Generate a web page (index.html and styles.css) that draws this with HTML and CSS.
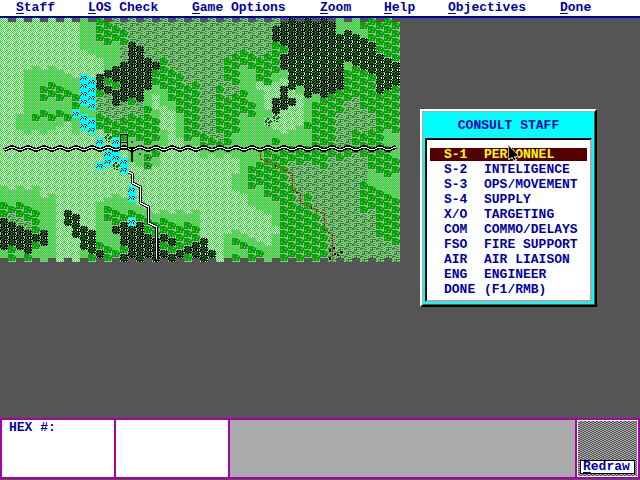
FILE: index.html
```html
<!DOCTYPE html>
<html lang="en">
<head>
<meta charset="utf-8">
<title>Consult Staff</title>
<link rel="stylesheet" href="styles.css">
</head>
<body>
<nav class="menubar" aria-label="Main menu">
  <button type="button"><u>S</u>taff</button>
  <button type="button"><u>L</u>OS Check</button>
  <button type="button"><u>G</u>ame Options</button>
  <button type="button"><u>Z</u>oom</button>
  <button type="button"><u>H</u>elp</button>
  <button type="button"><u>O</u>bjectives</button>
  <button type="button"><u>D</u>one</button>
</nav>
<main class="desktop">
  <div class="map">
  <canvas id="terrain" width="400" height="244"></canvas>
  <svg width="400" height="244" viewBox="0 0 400 244" shape-rendering="crispEdges" role="img" aria-label="Hex map">
    <g fill="none" stroke-linejoin="miter">
      <path id="river-bank" stroke="#000" stroke-width="4"/>
      <path id="river" stroke="#fff" stroke-width="1"/>
      <path stroke="#000" stroke-width="3" d="M128.500 154L132.500 156V165L140.500 169V185L148.500 189V205L156.500 209V241"/>
      <path stroke="#fff" stroke-width="1" d="M128.500 154L132.500 156V165L140.500 169V185L148.500 189V205L156.500 209V241"/>
      <path stroke="#aa5500" stroke-width="1" d="M260.500 132V141L292.500 156V172L300.500 176V185L324.500 196V212L332.500 217V241"/>
      <path stroke="#000" stroke-width="1" stroke-dasharray="1 4" d="M260.500 132V141L292.500 156V172L300.500 176V185L324.500 196V212L332.500 217V241"/>
      <path stroke="#000" d="M120.500 116.500H127.500V131.500H120.500ZM120 124H128"/>
      <path stroke="#000" stroke-width="2" d="M132 129V144"/>
    </g>
    <path fill="#000" d="M329 231h2v3h-2zM333 229h2v2h-2zM329 239h2v3h-2zM337 236h2v2h-2zM340 233h3v2h-3zM334 235h2v2h-2z"/>
    <path fill="#aa00aa" d="M131 123h2v2h-2zM139 127h2v2h-2zM139 135h2v2h-2zM147 139h2v2h-2zM147 147h2v2h-2z"/>
  </svg>
  </div>
  <section class="dialog" aria-labelledby="dialog-title">
    <h1 id="dialog-title">CONSULT STAFF</h1>
    <div class="list">
      <button type="button" class="selected"><span>S-1</span><span>PERSONNEL</span></button>
      <button type="button"><span>S-2</span><span>INTELIGENCE</span></button>
      <button type="button"><span>S-3</span><span>OPS/MOVEMENT</span></button>
      <button type="button"><span>S-4</span><span>SUPPLY</span></button>
      <button type="button"><span>X/O</span><span>TARGETING</span></button>
      <button type="button"><span>COM</span><span>COMMO/DELAYS</span></button>
      <button type="button"><span>FSO</span><span>FIRE SUPPORT</span></button>
      <button type="button"><span>AIR</span><span>AIR LIAISON</span></button>
      <button type="button"><span>ENG</span><span>ENGINEER</span></button>
      <button type="button"><span>DONE</span><span>(F1/RMB)</span></button>
    </div>
    <svg class="pointer" width="11" height="17" viewBox="0 0 11 17" aria-hidden="true" shape-rendering="crispEdges">
      <path fill="#000" stroke="#aaa" d="M.5 .5L9.500 9.500V11.500H6.500L8.500 15.500H5.500L4.500 12.500L2.500 13.500L.5 14.500Z"/>
    </svg>
  </section>
</main>
<footer class="status">
  <div class="cell">HEX #:</div>
  <div class="cell"></div>
  <div class="cell message"></div>
  <div class="cell tools"><button type="button"><u>R</u>edraw</button></div>
</footer>
<script>
const COLORS = {
  l: "#00ff00", w: "#ffffff", a: "#aaaaaa", d: "#00aa00",
  f: "#005500", k: "#000000", c: "#00ffff"
};

// One 8x8 bitmap per terrain: c clear, m meadow, w woods, r brush,
// F forest, D forest in clear ground, b water, t rubble.
const TILES = {
  c: ["lwlwlwaa", "wlwlwlwl", "lwlwlwlw", "wlwlwlwl", "lwlwawaa", "wlwlwlwl", "lwlwlwlw", "aaawaaaa"],
  m: ["alalalaa", "lalalala", "alalalal", "lalalala", "alalalaa", "lalalala", "llalalal", "aalaalaa"],
  w: ["dddddlaa", "ddddddda", "dddddadd", "dddddddd", "dadddddd", "ddddadda", "ddddddda", "aaaaaaaa"],
  r: ["aadddaaa", "adaaadda", "ddddaaaa", "ddaaddda", "aaaaaaaa", "aadddddd", "daaadaaa", "aadddada"],
  F: ["akfkkaka", "kkfdfkkk", "akdkfdka", "kfkffkfk", "kkfdkfkk", "kdfkfdfa", "akkfkkkk", "akakkaka"],
  D: ["wkfkkwkw", "kkfdfkkk", "lkdkfdkl", "kfkffkfk", "kkfdkfkk", "kdfkfdfw", "lkkfkkkk", "wklkkwkl"],
  b: ["cccccccc", "cccccccc", "ckcckkcc", "cckcccka", "ckckckcc", "kcccckcc", "cccccccc", "cccccccc"],
  t: ["wlwkklwa", "lwddkwlw", "wkdlwlkl", "ddkwlddk", "wkdlkkda", "lwlwddlw", "wlklwlwl", "aaawkkaa"]
};

// Run lengths of terrain from top to bottom, one string per column.
const COLUMNS = [
  "c21 m2 w2 F4 m1", "c21 m2 w1 r1 F3 w2", "c12 m2 c7 m2 w2 r1 F3 m1", "c6 m8 c7 m2 w2 r1 F3 w1",
  "c6 m6 w1 m1 c7 m3 w3 F1 w1 m1", "c6 m2 w2 m1 w1 m2 c8 m4 F2 m2", "c6 m2 w2 m2 w1 m1 c8 m8",
  "c6 m2 w2 m1 w1 m1 c17", "c7 m2 w1 m2 w1 c11 D2 c4", "c7 m2 w2 b1 m2 c10 D3 c3",
  "m4 c3 b4 m1 b2 c12 D3 m1", "m4 c3 b4 m1 b2 c12 D3 w1",
  "w3 m2 c2 F2 w1 r2 w2 c1 b1 c2 b1 c4 m5 w1 F1", "w3 m3 F1 w1 F1 r3 w2 t1 c1 b2 c4 m1 w2 m3 w2",
  "r1 w2 m3 F2 w1 F2 r2 w2 b3 t1 c3 m2 w2 F1 m2 w1", "r1 w2 r2 F5 r2 w3 m1 c1 b2 c3 m2 w1 F3 w1 F1",
  "r3 F7 w1 r1 w3 m3 c3 b2 m1 w1 b1 F4", "r3 F7 r2 w3 m3 c5 m1 w1 F5",
  "r5 F4 m2 w5 m1 w2 c5 m1 w2 F3", "r5 F1 w2 m1 c2 m1 w3 m1 w1 m1 c6 m1 w2 F3",
  "r5 w4 m2 c3 m2 c8 m1 w2 F1 w1 F1", "r6 w4 m1 c13 m1 w2 F1 w1 F1",
  "r7 w5 m3 c9 m2 w3 F1", "r8 w7 m1 c8 m1 w3 F1 w1", "r8 w7 m1 c8 m2 w2 F2",
  "r14 w2 m1 c10 D3", "r15 w1 m1 c12 D1", "r8 w6 r1 w1 m1 c13", "r5 w3 r2 w6 m1 c10 m3",
  "r4 w4 r1 w5 m3 c2 m2 c5 m1 w1 m1 w1", "r4 w2 m3 w3 m10 c5 m1 w1 m1",
  "r4 w2 m4 w2 m6 w3 m2 c4 m1 w2", "r5 w3 c1 m9 w3 m3 c4 m1 w1", "r4 w4 c3 m1 t1 m3 w6 m2 c4 m2",
  "r1 F2 w4 m1 c2 F2 t1 c1 m1 w1 m1 w6 m3 c1 m3", "F3 w1 F2 m1 c1 F3 c3 m2 w14",
  "F5 D4 c1 F1 c3 m2 w2 r3 w9", "F4 D4 m1 c4 m3 w2 r5 w7", "F4 D4 F2 m3 w1 m2 w2 r4 w8",
  "F4 D4 F1 m1 w8 r6 w6", "F3 D4 F3 w9 r7 w4", "F3 D3 F3 w8 r13",
  "m2 D4 F3 w3 r5 w1 r12", "m1 D4 m1 w4 r6 w1 r13", "m2 D4 w4 r4 w3 r13",
  "w1 m1 D4 w5 r3 w3 r3 w4 r6", "w3 D4 w5 r2 w5 m2 w3 r6", "w4 D5 w10 m2 w6 r3",
  "w5 D4 w5 m2 w4 m2 w6 r2", "w5 D3 w6 m3 w2 m3 w6 r2"
];

const terrain = document.getElementById("terrain").getContext("2d");

function drawTile(code, left, top) {
  TILES[code].forEach((line, y) => [...line].forEach((pixel, x) => {
    terrain.fillStyle = COLORS[pixel];
    terrain.fillRect(left + x, top + y, 1, 1);
  }));
}

COLUMNS.forEach((column, index) => {
  let row = 0;
  for (const run of column.split(" ")) {
    for (let n = Number(run.slice(1)); n > 0; n--) {
      drawTile(run[0], index * 8, row * 8 + (index % 2) * 4);
      row++;
    }
  }
});

let river = "M4 132";
for (let x = 12; x <= 396; x += 8) river += `L${x} ${x % 16 === 12 ? 129 : 132}`;
document.getElementById("river-bank").setAttribute("d", river);
document.getElementById("river").setAttribute("d", river);
</script>
</body>
</html>
```
FILE: styles.css
```css
* {
  box-sizing: border-box;
}

body {
  margin: 0;
  min-height: 100vh;
  display: flex;
  flex-direction: column;
  background: #555;
  color: #0000aa;
  font: bold 13px/15px "Liberation Mono", monospace;
}

button {
  margin: 0;
  padding: 0;
  border: 0;
  background: none;
  color: inherit;
  font: inherit;
  text-align: left;
  white-space: nowrap;
}

u {
  text-underline-offset: 2px;
  text-decoration-thickness: 1px;
}

.menubar {
  display: grid;
  grid-template-columns: 72px 104px 128px 64px 64px 112px auto;
  height: 18px;
  padding-left: 16px;
  background: #fff;
  border-bottom: 2px solid #0000aa;
}

.menubar button {
  line-height: 14px;
}

.desktop {
  flex: 1;
  display: flex;
  align-items: flex-start;
}

.map {
  display: grid;
  flex: none;
}

.map > * {
  grid-area: 1 / 1;
}

.dialog {
  position: relative;
  width: 177px;
  margin: 91px 0 0 20px;
  padding: 0 3px 3px;
  background: #00ffff;
  border: 2px solid;
  border-color: #fff #000 #000 #fff;
  box-shadow: inset 1px 1px #aaa, inset -1px -1px #555;
}

.dialog h1 {
  margin: 0;
  padding: 7px 0 5px;
  font: inherit;
  text-align: center;
}

.list {
  display: grid;
  grid-auto-rows: 15px;
  padding: 7px 3px 3px;
  background: #fff;
  border: 2px solid;
  border-color: #000 #aaa #aaa #000;
}

.list button {
  display: grid;
  grid-template-columns: 40px auto;
  justify-content: start;
  padding-left: 14px;
}

.list .selected {
  margin: 1px 0;
  line-height: 13px;
  background: #550000;
  color: #ffff00;
}

.pointer {
  position: absolute;
  left: 86px;
  top: 34px;
}

.status {
  display: grid;
  grid-template-columns: 112px 112px 1fr 61px;
  gap: 2px;
  height: 61px;
  margin-bottom: 1px;
  border: 2px solid #aa00aa;
  background: #aa00aa;
}

.cell {
  padding-left: 7px;
  background: #fff;
}

.message {
  background: #aaa;
}

.tools {
  display: flex;
  align-items: flex-end;
  padding: 0 2px 2px;
  border: 1px solid #fff;
  background: repeating-conic-gradient(#555 0 25%, #aaa 0 50%) 0 0 / 4px 2px;
}

.tools button {
  flex: 1;
  height: 14px;
  padding-left: 2px;
  line-height: 12px;
  background: #fff;
  border: 1px solid #000;
}
```
